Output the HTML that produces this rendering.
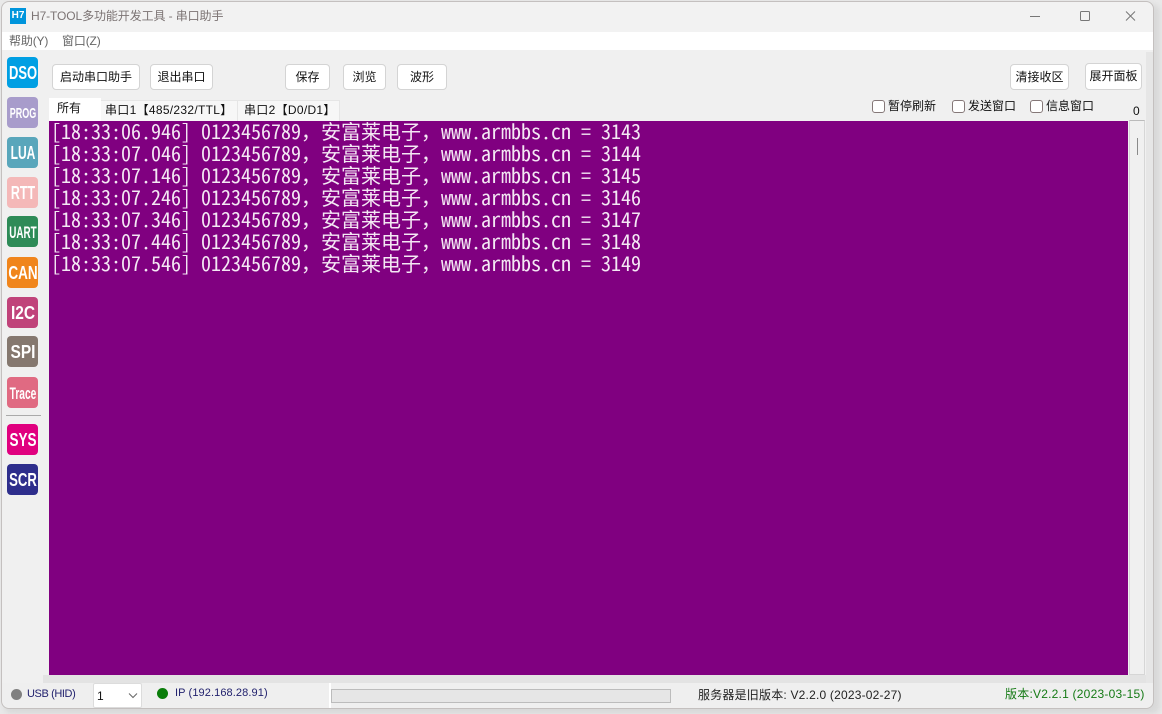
<!DOCTYPE html>
<html><head><meta charset="utf-8"><style>
*{box-sizing:border-box}
html,body{margin:0;padding:0;width:1162px;height:714px;overflow:hidden;background:#e9e9e9;font-family:"Liberation Sans","Microsoft YaHei","Noto Sans CJK SC",sans-serif;font-size:12px;color:#111}
.a{position:absolute;white-space:nowrap}
#shadow{left:4px;top:4px;width:1156px;height:710px;border-radius:8px;background:#d8d8d8;filter:blur(3px)}
.btn{position:absolute;background:#fff;border:1px solid #d4d4d4;border-radius:4px;text-align:center;font-size:12px;height:26px;line-height:25px;color:#111}
.ic{position:absolute;left:7px;width:31px;height:31px;border-radius:4px;color:#fff;font-weight:bold;line-height:33px;font-size:18px;overflow:hidden}
.ic span{position:absolute;left:50%;top:0;white-space:nowrap;transform:translateX(-50%) scaleX(var(--s))}
.tab{position:absolute;top:100px;height:21px;background:#f7f7f7;border:1px solid #e6e6e6;border-bottom:0;line-height:19px;font-size:12px;color:#111;padding-left:4px;letter-spacing:.3px}
.cb{position:absolute;top:100px;width:13px;height:13px;border:1px solid #857878;border-radius:3px;background:#fff}
.lbl{position:absolute;top:98px;font-size:12px;line-height:17px}
.ln{position:absolute;left:51px;height:22px;line-height:22px;font-size:20px;color:#f4e8f4;font-family:"Noto Sans Mono CJK SC","WenQuanYi Zen Hei Mono","Liberation Mono","Noto Sans CJK SC",monospace;white-space:pre}
</style></head><body>
<div class="a" id="shadow"></div>
<div class="a" style="left:1px;top:1px;width:1153px;height:708px;border:1px solid #c4c0bf;border-radius:8px;background:#f0f0f0"></div>
<div class="a" style="left:2px;top:2px;width:1151px;height:30px;background:#f2f2f2;border-radius:8px 8px 0 0"></div>
<div class="a" style="left:10px;top:8px;width:16px;height:16px;background:#0095dc;color:#fff;font-size:10px;font-weight:bold;text-align:center;line-height:16px">H7</div>
<div class="a" style="left:31px;top:8px;font-size:12px;line-height:16px;color:#7c7474;letter-spacing:-.1px">H7-TOOL多功能开发工具 - 串口助手</div>
<svg class="a" style="left:1030px;top:8px" width="115" height="17" viewBox="0 0 115 17" fill="none" stroke="#777" stroke-width="1"><path d="M0 8.5H10"/><rect x="50.5" y="3.5" width="9" height="9" rx="1"/><path d="M96 3.5L105 12.5M105 3.5L96 12.5"/></svg>
<div class="a" style="left:2px;top:32px;width:1151px;height:18px;background:#fff"></div>
<div class="a" style="left:9px;top:33px;font-size:12px;line-height:17px;color:#666;letter-spacing:-.15px">帮助(Y)</div>
<div class="a" style="left:62px;top:33px;font-size:12px;line-height:17px;color:#666;letter-spacing:-.15px">窗口(Z)</div>
<div class="a" style="left:1146px;top:52px;width:7px;height:631px;background:#e6e6e6"></div>

<div class="ic" style="top:57px;background:#009fe3"><span style="--s:.72">DSO</span></div>
<div class="ic" style="top:97px;background:#a89ccb;font-size:15px"><span style="--s:.6">PROG</span></div>
<div class="ic" style="top:137px;background:#59a6bb"><span style="--s:.67">LUA</span></div>
<div class="ic" style="top:177px;background:#f4b8b8"><span style="--s:.69">RTT</span></div>
<div class="ic" style="top:216px;background:#2e8b57;font-size:17px"><span style="--s:.58">UART</span></div>
<div class="ic" style="top:257px;background:#f0851c"><span style="--s:.75">CAN</span></div>
<div class="ic" style="top:297px;background:#c0437a"><span style="--s:.86">I2C</span></div>
<div class="ic" style="top:336px;background:#85786f"><span style="--s:.86">SPI</span></div>
<div class="ic" style="top:377px;background:#e06a82;font-size:17px"><span style="--s:.6">Trace</span></div>
<div class="a" style="left:6px;top:415px;width:35px;height:1px;background:#aaa"></div>
<div class="ic" style="top:424px;background:#e0007f"><span style="--s:.75">SYS</span></div>
<div class="ic" style="top:464px;background:#2e2e8c"><span style="--s:.73">SCR</span></div>

<div class="btn" style="left:52px;top:64px;width:88px">启动串口助手</div>
<div class="btn" style="left:150px;top:64px;width:63px">退出串口</div>
<div class="btn" style="left:285px;top:64px;width:45px">保存</div>
<div class="btn" style="left:343px;top:64px;width:43px">浏览</div>
<div class="btn" style="left:397px;top:64px;width:50px">波形</div>
<div class="btn" style="left:1010px;top:64px;width:59px">清接收区</div>
<div class="btn" style="left:1085px;top:63px;width:57px;height:27px">展开面板</div>

<div class="tab" style="left:101px;width:137px;border-left:0">串口1【485/232/TTL】</div>
<div class="tab" style="left:238px;width:102px;padding-left:6px;border-left:0">串口2【D0/D1】</div>
<div class="tab" style="left:49px;top:98px;height:23px;width:52px;background:#fff;padding-left:8px;border:0;line-height:21px;letter-spacing:0">所有</div>

<div class="cb" style="left:872px"></div><div class="lbl" style="left:888px">暂停刷新</div>
<div class="cb" style="left:952px"></div><div class="lbl" style="left:968px">发送窗口</div>
<div class="cb" style="left:1030px"></div><div class="lbl" style="left:1046px">信息窗口</div>
<div class="a" style="left:1133px;top:103px;font-size:12px;line-height:16px">0</div>

<div class="a" style="left:49px;top:121px;width:1079px;height:554px;background:#800080"></div>
<div class="ln" style="top:120px">[18:33:06.946] 0123456789，安富莱电子，www.armbbs.cn = 3143</div>
<div class="ln" style="top:142px">[18:33:07.046] 0123456789，安富莱电子，www.armbbs.cn = 3144</div>
<div class="ln" style="top:164px">[18:33:07.146] 0123456789，安富莱电子，www.armbbs.cn = 3145</div>
<div class="ln" style="top:186px">[18:33:07.246] 0123456789，安富莱电子，www.armbbs.cn = 3146</div>
<div class="ln" style="top:208px">[18:33:07.346] 0123456789，安富莱电子，www.armbbs.cn = 3147</div>
<div class="ln" style="top:230px">[18:33:07.446] 0123456789，安富莱电子，www.armbbs.cn = 3148</div>
<div class="ln" style="top:252px">[18:33:07.546] 0123456789，安富莱电子，www.armbbs.cn = 3149</div>

<div class="a" style="left:1129px;top:120px;width:16px;height:555px;background:#f0f0f0;border:1px solid #d6d6d6;border-top:1px solid #bbb"></div>
<div class="a" style="left:1137px;top:138px;width:1px;height:17px;background:#8a8a8a"></div>

<div class="a" style="left:43px;top:675px;width:1103px;height:8px;background:#e3e3e3"></div>
<div class="a" style="left:2px;top:683px;width:1151px;height:25px;background:#efefef;border-radius:0 0 8px 8px"></div>
<div class="a" style="left:329px;top:683px;height:25px;width:2px;background:#fff"></div>
<div class="a" style="left:11px;top:689px;width:11px;height:11px;border-radius:50%;background:#808080"></div>
<div class="a" style="left:27px;top:687px;font-size:11px;line-height:15px;color:#22226e;letter-spacing:-.4px">USB (HID)</div>
<div class="a" style="left:93px;top:683px;width:49px;height:25px;background:#fff;border:1px solid #dcdcdc;border-radius:2px;font-size:12px;line-height:24px;padding-left:3px">1</div>
<svg class="a" style="left:128px;top:693px" width="10" height="6" fill="none" stroke="#666"><path d="M1 .5L5 4.5L9 .5"/></svg>
<div class="a" style="left:157px;top:688px;width:11px;height:11px;border-radius:50%;background:#0a7d0a"></div>
<div class="a" style="left:175px;top:686px;font-size:11px;line-height:15px;color:#22226e;letter-spacing:.1px">IP (192.168.28.91)</div>
<div class="a" style="left:331px;top:689px;width:340px;height:14px;background:#e6e6e6;border:1px solid #bcbcbc"></div>
<div class="a" style="left:698px;top:687px;font-size:12px;line-height:16px;color:#222;letter-spacing:.2px">服务器是旧版本: V2.2.0 (2023-02-27)</div>
<div class="a" style="left:1005px;top:686px;font-size:12px;line-height:16px;color:#157a15;letter-spacing:.22px">版本:V2.2.1 (2023-03-15)</div>
</body></html>
